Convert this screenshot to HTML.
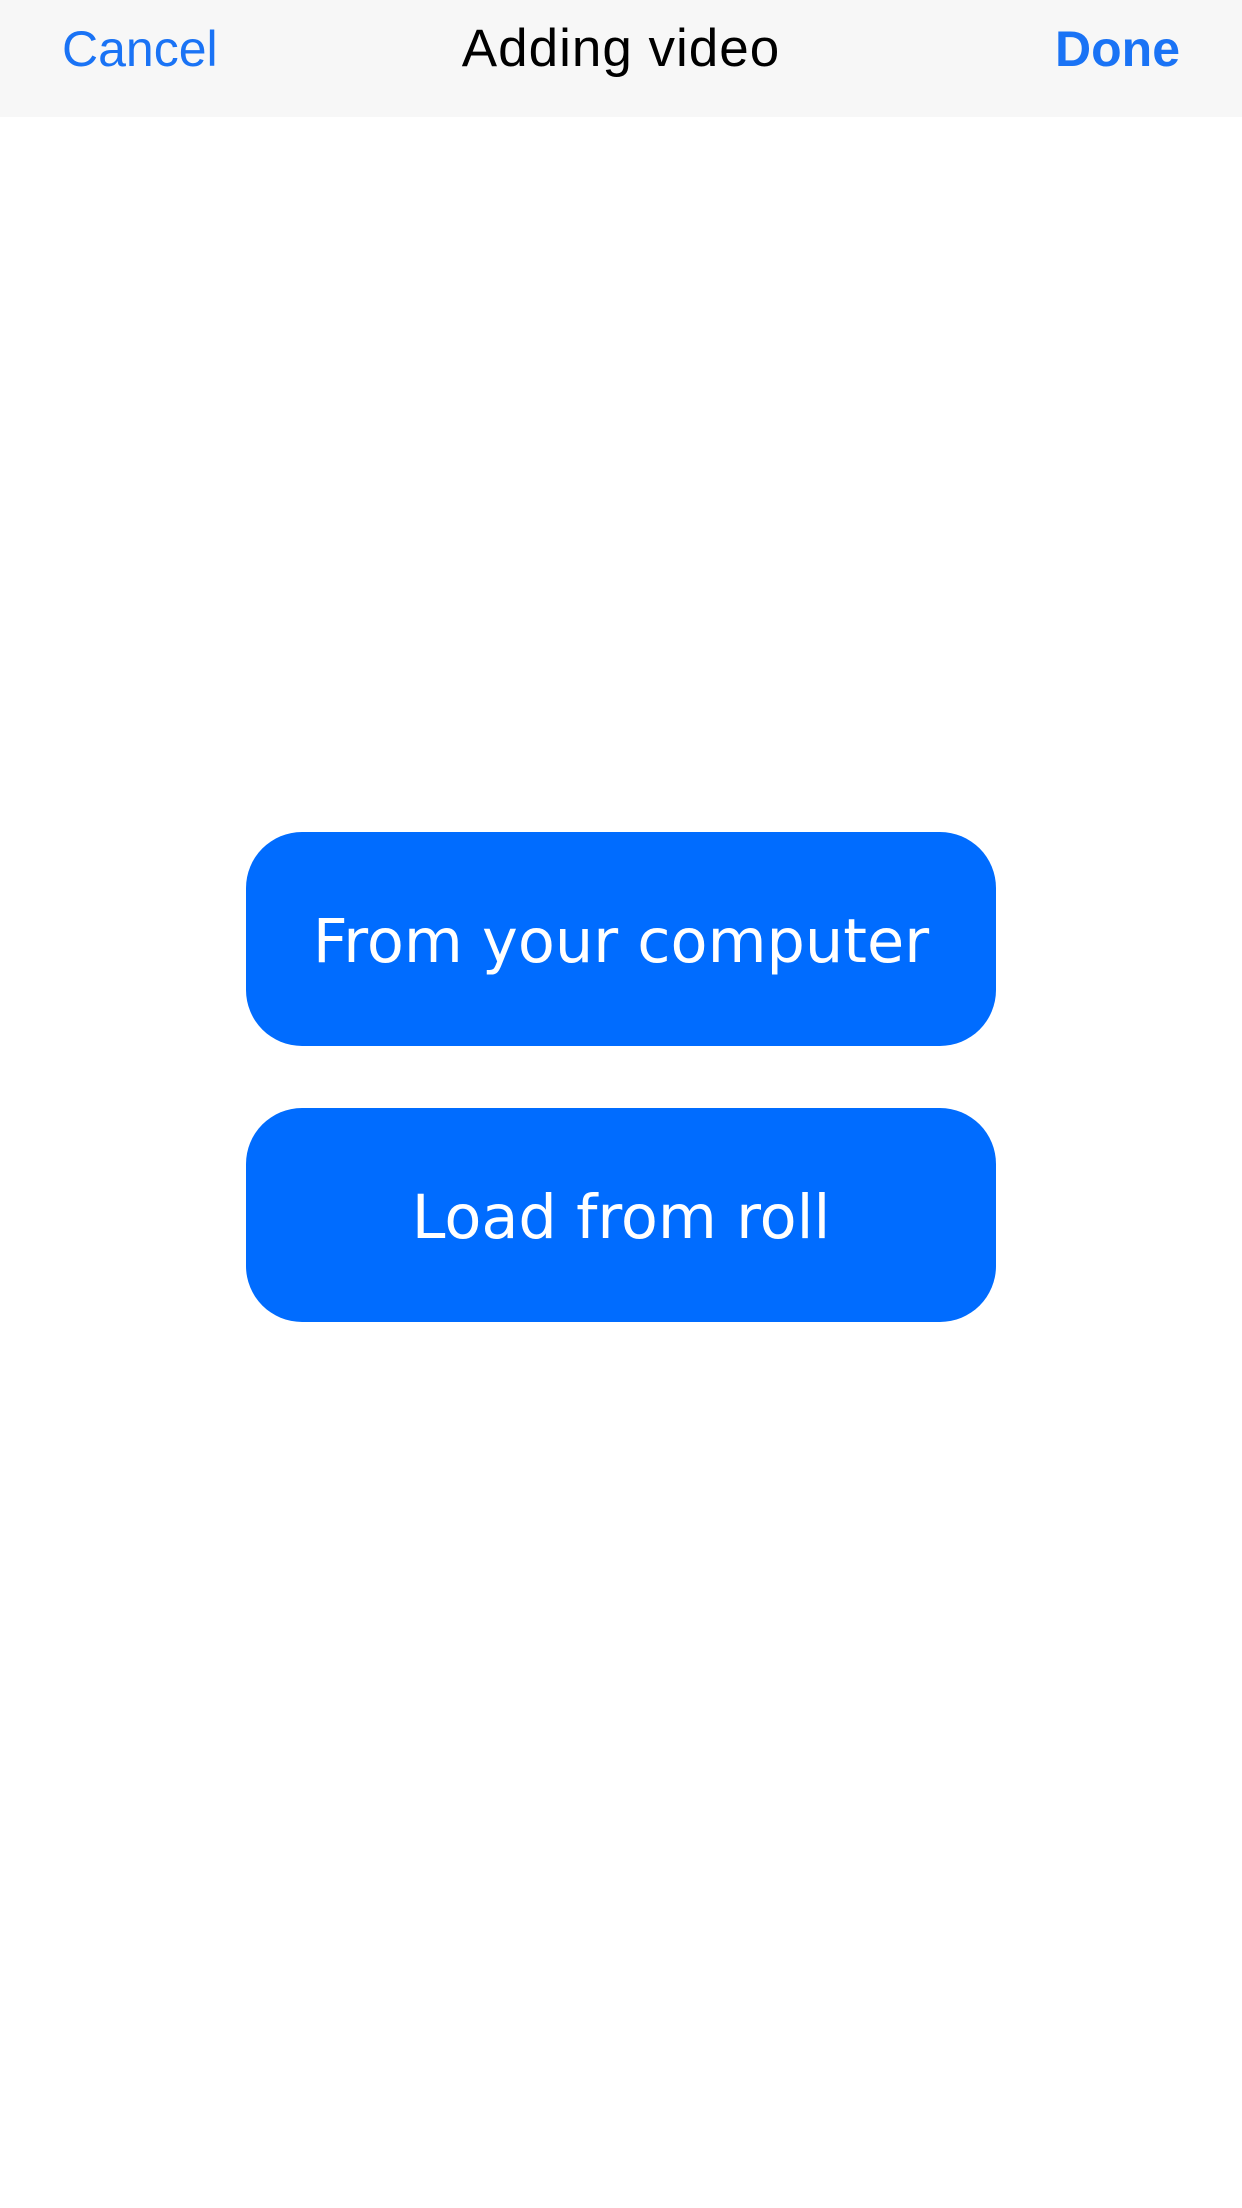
<!DOCTYPE html>
<html><head><meta charset="utf-8"><style>
html,body{margin:0;padding:0;}
body{width:1242px;height:2208px;background:#fff;position:relative;overflow:hidden;font-family:"Liberation Sans",sans-serif;}
.nav{position:absolute;left:0;top:0;width:1242px;height:117px;background:#f7f7f7;}
.nav span{position:absolute;top:0;line-height:98px;font-size:50px;}
.cancel{left:62px;color:#1a73f5;}
.title{left:0;width:1242px;text-align:center;color:#000;font-size:53px !important;letter-spacing:1px;}
.done{right:62px;color:#1a73f5;font-weight:bold;}
.btn{position:absolute;left:246px;width:750px;height:214px;border-radius:56px;background:#006cff;color:#fff;font-family:"DejaVu Sans",sans-serif;font-size:60.5px;text-align:center;line-height:220px;}
</style></head><body>
<div class="nav"><span class="cancel">Cancel</span><span class="title">Adding video</span><span class="done">Done</span></div>
<div class="btn" style="top:832px">From your computer</div>
<div class="btn" style="top:1108px">Load from roll</div>
</body></html>
